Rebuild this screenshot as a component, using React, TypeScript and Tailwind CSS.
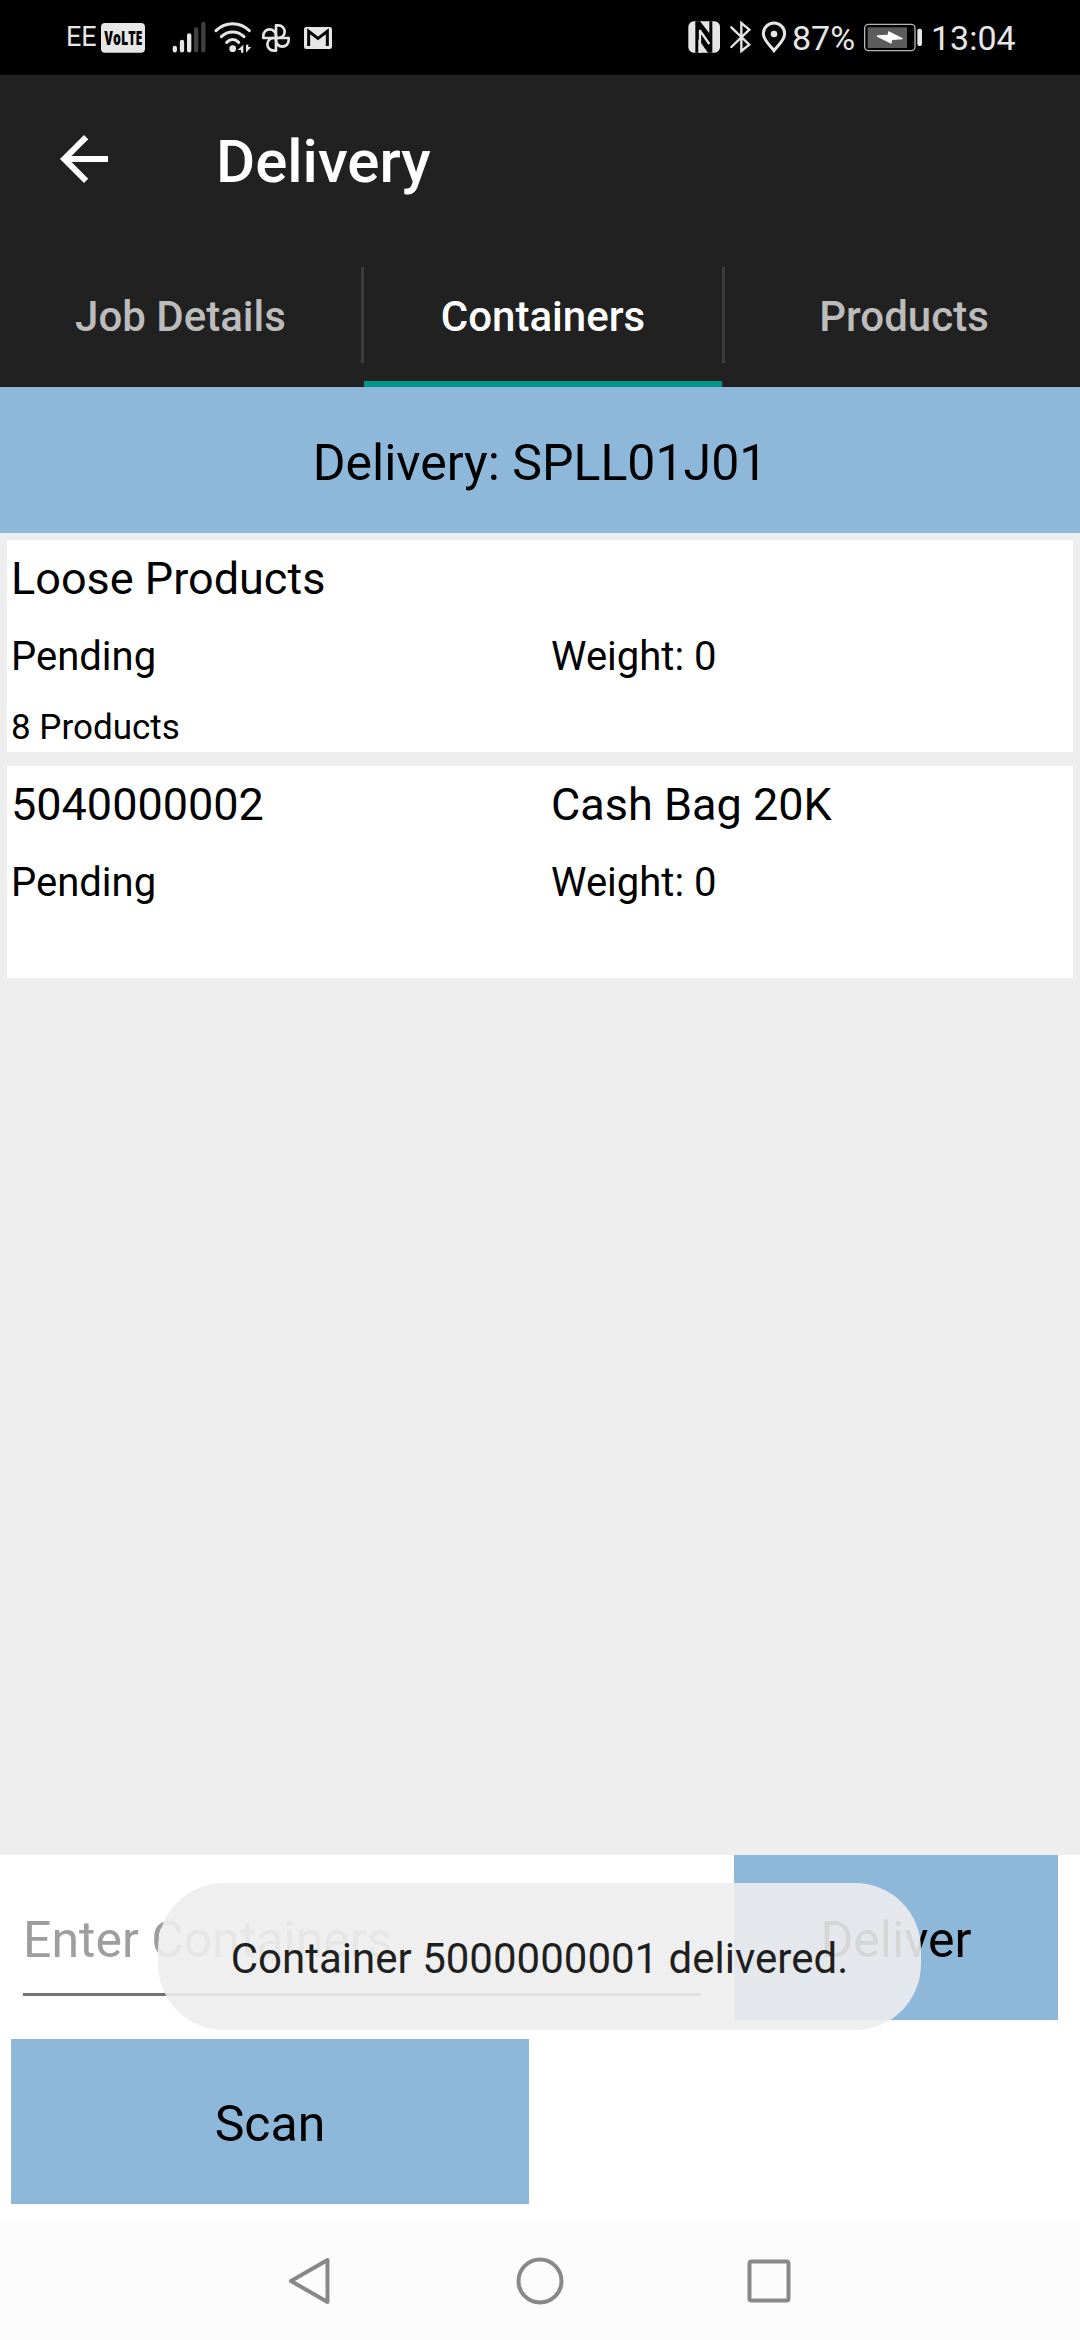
import type { ReactNode } from "react";
import clsx from "clsx";

type Container = {
  name: string;
  type?: string;
  status: string;
  weight: number;
  note?: string;
};

const tabs = ["Job Details", "Containers", "Products"];

const containers: Container[] = [
  { name: "Loose Products", status: "Pending", weight: 0, note: "8 Products" },
  { name: "5040000002", type: "Cash Bag 20K", status: "Pending", weight: 0 },
];

/* Status bar glyphs share one coordinate space, three units to the pixel */
function Glyph({
  box,
  className,
  children,
}: {
  box: string;
  className: string;
  children: ReactNode;
}) {
  return (
    <svg
      viewBox={box}
      className={clsx("h-[75px] shrink-0", className)}
      fill="none"
      aria-hidden="true"
    >
      {children}
    </svg>
  );
}

function StatusBar() {
  return (
    <div className="flex h-[75px] items-center bg-black pl-[66px] text-[#e6e6e6]">
      <span className="w-[35px] text-[27px] leading-[75px]">EE</span>

      <Glyph box="153 0 132 225" className="w-[44px]">
        <rect x="153" y="69" width="132" height="89" rx="12" fill="#e6e6e6" />
        <text
          x="163"
          y="134"
          fontSize="57"
          fontWeight="800"
          fontFamily="Open Sans, sans-serif"
          textLength="114"
          lengthAdjust="spacingAndGlyphs"
          fill="#000"
        >
          VoLTE
        </text>
      </Glyph>

      {/* Signal */}
      <Glyph box="366 0 102 225" className="ml-[27px] w-[34px]">
        <g strokeWidth="13" strokeLinecap="round">
          <path d="M374.5 144V151M396 126V151M417.5 106V151" stroke="#e6e6e6" />
          <path d="M438.5 88V151M460 72V151" stroke="#404040" />
        </g>
      </Glyph>

      {/* Wi-Fi */}
      <Glyph box="492 0 114 225" className="ml-2 w-[38px]">
        <g stroke="#e6e6e6" strokeWidth="9" strokeLinecap="round">
          <path d="M498 92C526 64 570 64 598 92" />
          <path d="M514 110C533 91 563 91 582 110" />
          <path d="M530 127C541 116 555 116 566 127" />
        </g>
        <circle cx="548" cy="146" r="10" fill="#e6e6e6" />
        <path
          d="M580 134V158H573V150H563ZM588 134V158L604 141H595V134Z"
          fill="#e6e6e6"
        />
      </Glyph>

      {/* Photos pinwheel */}
      <Glyph box="633 0 90 225" className="ml-[9px] w-[30px]">
        <g stroke="#e6e6e6" strokeWidth="8" strokeLinejoin="round">
          {[0, 90, 180, 270].map((angle) => (
            <path
              key={angle}
              d="M678 114H640V107A19 19 0 0 1 678 107Z"
              transform={`rotate(${angle} 678 114)`}
            />
          ))}
        </g>
      </Glyph>

      {/* Mail */}
      <Glyph box="759 0 90 225" className="ml-3 w-[30px]">
        <rect x="762" y="81" width="84" height="66" rx="7" fill="#e6e6e6" />
        <path d="M776 138V94L804 115L832 94V138" stroke="#000" strokeWidth="9" />
      </Glyph>

      {/* NFC */}
      <Glyph box="54 0 99 225" className="ml-[355px] w-[33px]">
        <rect x="55" y="64" width="95" height="94" rx="16" fill="#e6e6e6" />
        <path
          d="M76 64H90L118 100V64H127V158H114L85 118V158H76Z"
          fill="#000"
        />
        <path
          d="M90 158V92L118 132"
          stroke="#e6e6e6"
          strokeWidth="7"
          strokeLinejoin="round"
        />
      </Glyph>

      {/* Bluetooth */}
      <Glyph box="180 0 63 225" className="ml-[9px] w-[21px]">
        <path
          d="M184 82L238 134L214 153V69L238 89L184 141"
          stroke="#e6e6e6"
          strokeWidth="7"
          strokeLinecap="round"
        />
      </Glyph>

      {/* Location */}
      <Glyph box="273 0 78 225" className="ml-2.5 w-[26px]">
        <path
          d="M312 152C301 137 280 120 280 101A32 32 0 0 1 344 101C344 120 323 137 312 152Z"
          stroke="#e6e6e6"
          strokeWidth="9"
        />
        <circle cx="312" cy="102" r="10" fill="#e6e6e6" />
      </Glyph>

      <span className="ml-[5px] w-[72px] pt-[2px] text-[34px] leading-[73px]">
        87%
      </span>

      {/* Battery */}
      <Glyph box="582 0 177 225" className="w-[59px]">
        <rect
          x="584"
          y="73"
          width="151"
          height="79"
          rx="11"
          stroke="#b4b4b4"
          strokeWidth="4"
        />
        <rect x="593" y="82" width="118" height="62" fill="#5c5c5c" />
        <path
          d="M621 106L653 104L655 93L698 115V118L667 120L664 131L621 110Z"
          fill="#fff"
        />
        <rect x="742" y="86" width="14" height="52" rx="6" fill="#e6e6e6" />
      </Glyph>

      <span className="ml-2 pt-[2px] text-[34px] leading-[73px]">13:04</span>
    </div>
  );
}

function AppBar() {
  return (
    <header className="flex h-[168px] items-center bg-[#212121] pl-12 text-white">
      <svg viewBox="0 0 24 24" className="h-[72px] w-[72px]" fill="currentColor">
        <path d="M20 11H7.83l5.59-5.59L12 4l-8 8 8 8 1.41-1.41L7.83 13H20v-2z" />
      </svg>
      <h1 className="ml-24 pt-[5px] text-[60px] font-medium leading-[70px]">
        Delivery
      </h1>
    </header>
  );
}

function TabBar({ active }: { active: string }) {
  return (
    <nav className="flex h-[144px] overflow-hidden bg-[#212121]">
      {tabs.map((tab, i) => (
        <div key={tab} className="flex w-[361px] shrink-0">
          {i > 0 && <span className="mt-6 h-24 w-[3px] bg-[#3c3c3c]" />}
          <button
            className={clsx(
              "flex flex-1 items-center justify-center border-b-[6px] pt-[10px] text-[42px] font-medium leading-[50px]",
              tab === active
                ? "border-[#009688] text-white"
                : "border-transparent text-[#bcbcbc]"
            )}
          >
            {tab}
          </button>
        </div>
      ))}
    </nav>
  );
}

function ContainerCard({ item }: { item: Container }) {
  return (
    <article className="h-[212px] bg-white pl-1">
      <div className="grid grid-cols-[540px_1fr] text-[45px] leading-[77px]">
        <p>{item.name}</p>
        <p>{item.type}</p>
      </div>
      <div className="grid grid-cols-[540px_1fr] text-[40px] leading-[79px]">
        <p>{item.status}</p>
        <p>Weight: {item.weight}</p>
      </div>
      {item.note && (
        <p className="pt-[7px] text-[35px] leading-[49px]">{item.note}</p>
      )}
    </article>
  );
}

function EntryForm() {
  return (
    <section className="h-[367px] bg-white">
      <div className="flex items-start pl-[23px]">
        <input
          placeholder="Enter Containers"
          className="h-[141px] w-[678px] border-b-[3px] border-[#737373] pt-[31px] text-[50px] leading-[60px] outline-none placeholder:text-[#9e9e9e]"
        />
        <button className="ml-[33px] h-[165px] w-[324px] bg-[#8db8da] pt-[6px] text-[50px]">
          Deliver
        </button>
      </div>
      <button className="mt-[19px] ml-[11px] h-[165px] w-[518px] bg-[#8db8da] pt-[6px] text-[50px]">
        Scan
      </button>
    </section>
  );
}

function NavigationBar() {
  return (
    <footer className="flex h-[118px] items-center justify-center gap-[182px] bg-[#fcfcfc]">
      <svg viewBox="0 0 48 50" className="h-[50px] w-12" fill="none">
        <path
          d="M41.5 4V46L5 25Z"
          stroke="#888"
          strokeWidth="4"
          strokeLinejoin="round"
        />
      </svg>
      <svg viewBox="0 0 48 50" className="h-[50px] w-12" fill="none">
        <circle cx="24" cy="25" r="21.5" stroke="#888" strokeWidth="4" />
      </svg>
      <svg viewBox="0 0 48 50" className="h-[50px] w-12" fill="none">
        <rect
          x="3.5"
          y="5.5"
          width="39"
          height="39"
          rx="2"
          stroke="#888"
          strokeWidth="4"
        />
      </svg>
    </footer>
  );
}

export default function App() {
  return (
    <div className="relative flex h-[2340px] w-[1080px] flex-col overflow-hidden bg-[#eeeeee] font-[Roboto,sans-serif] text-black">
      <StatusBar />
      <AppBar />
      <TabBar active="Containers" />
      <h2 className="h-[146px] bg-[#8db8da] pt-[5px] text-center text-[50px] leading-[142px]">
        Delivery: SPLL01J01
      </h2>

      <main className="flex flex-1 flex-col gap-[14px] p-[7px]">
        {containers.map((item) => (
          <ContainerCard key={item.name} item={item} />
        ))}
      </main>

      <EntryForm />
      <NavigationBar />

      {/* Toast */}
      <div className="absolute top-[1883px] left-[158px] flex h-[147px] w-[763px] items-center justify-center rounded-[66px] bg-[#ededed]/90 pt-[4px] text-[42px] text-[#1f1f1f]">
        Container 5000000001 delivered.
      </div>
    </div>
  );
}
